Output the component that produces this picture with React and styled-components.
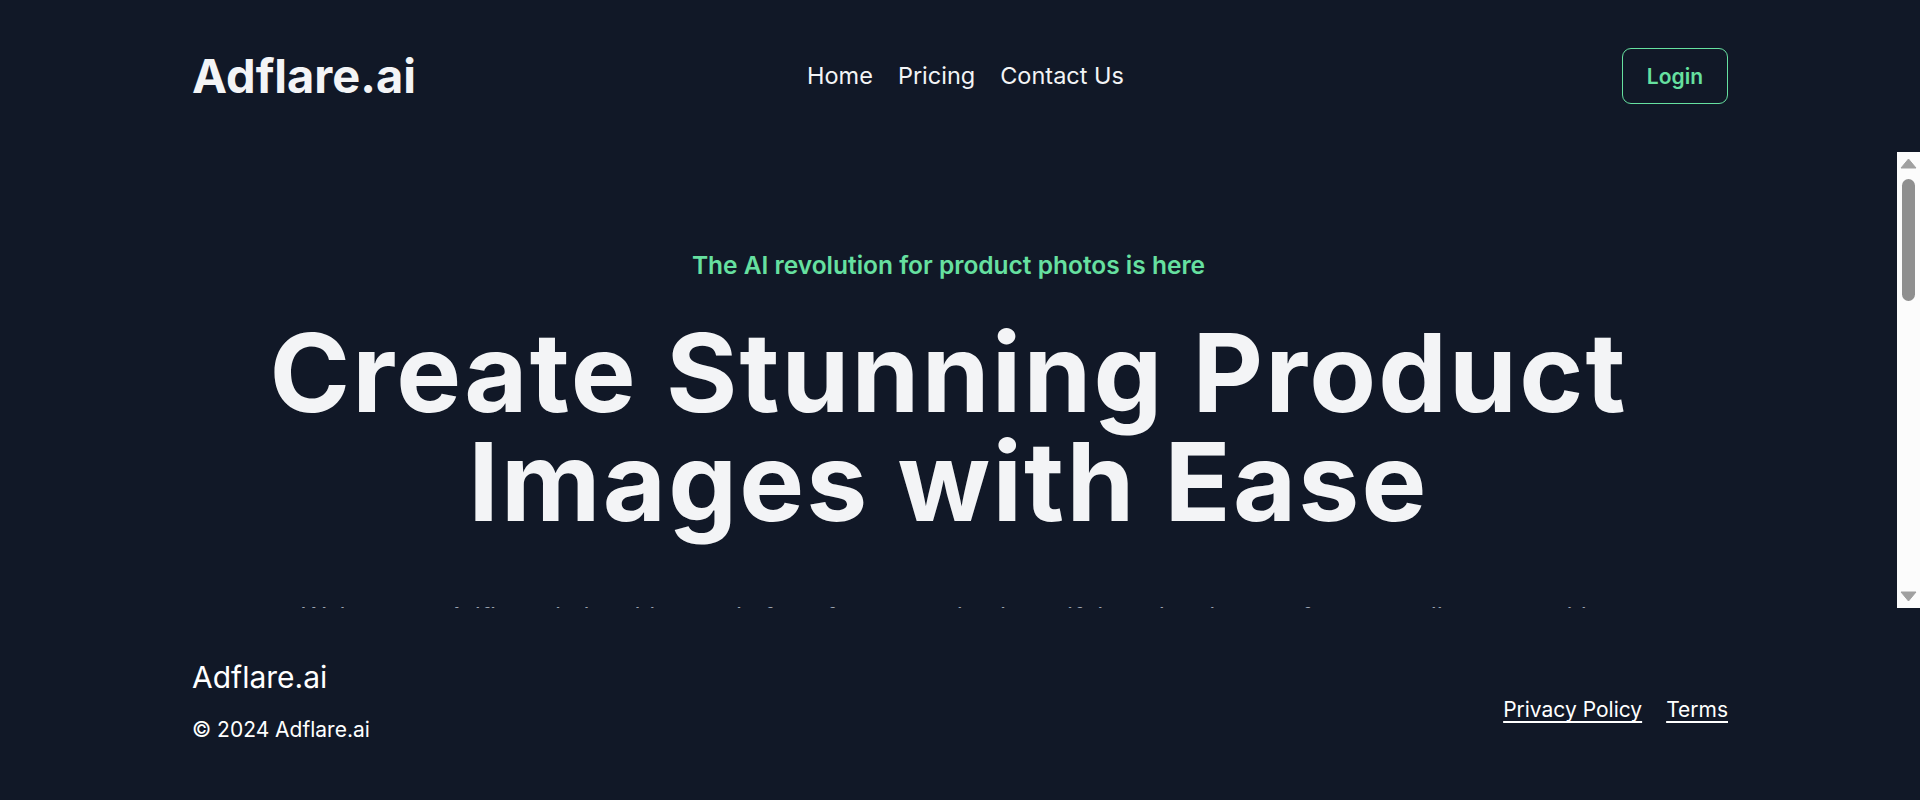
import React from "react";
import styled, { createGlobalStyle } from "styled-components";

const GREEN = "#66e0a0";
const BG = "#111827";

const Global = createGlobalStyle`
  html, body {
    margin: 0;
    padding: 0;
    background: ${BG};
    height: 100%;
    overflow: hidden;
  }
  #root { height: 100%; }
  * { box-sizing: border-box; }
  body {
    font-family: Inter, "Noto Sans", sans-serif;
    color: #f3f4f6;
  }
`;

const Page = styled.div`
  height: 100vh;
  display: flex;
  flex-direction: column;
  background: ${BG};
`;

const Header = styled.header`
  flex: 0 0 152px;
  display: flex;
  justify-content: center;
`;

const HeaderInner = styled.div`
  width: 1536px;
  display: grid;
  grid-template-columns: 1fr auto 1fr;
  align-items: center;
`;

const Logo = styled.a`
  font-size: 47px;
  line-height: 50px;
  font-weight: 700;
  color: #f3f4f6;
  text-decoration: none;
  justify-self: start;
`;

const Nav = styled.nav`
  display: flex;
  gap: 25px;
  padding-left: 11px;
`;

const NavLink = styled.a`
  font-size: 23.5px;
  line-height: 32px;
  color: #f3f4f6;
  text-decoration: none;
`;

const LoginButton = styled.button`
  justify-self: end;
  height: 56px;
  padding: 0 24px;
  border: 1px solid ${GREEN};
  border-radius: 9px;
  background: transparent;
  color: ${GREEN};
  font-family: Inter, sans-serif;
  font-size: 21px;
  font-weight: 600;
  cursor: pointer;
`;

const Main = styled.main`
  flex: 1 1 auto;
  min-height: 0;
  display: flex;
`;

const ScrollView = styled.div`
  flex: 1 1 auto;
  overflow-y: auto;
  overflow-x: hidden;
  scrollbar-width: none;
  &::-webkit-scrollbar { display: none; }
`;

const ScrollRail = styled.div`
  flex: 0 0 23px;
  display: flex;
  flex-direction: column;
  background: #fcfcfc;
`;

const RailButton = styled.div`
  flex: 0 0 23px;
  display: flex;
  align-items: center;
  justify-content: center;
`;

const RailTrack = styled.div`
  flex: 1 1 auto;
  padding: 4px 5px;
`;

const RailThumb = styled.div`
  height: 122px;
  border-radius: 7px;
  background: #8f8f8f;
`;

const Arrow = ({ down }) => (
  <svg width="23" height="23" viewBox="0 0 23 23">
    <polygon
      points={down ? "4,7 11.5,16 19,7" : "4,16 11.5,7 19,16"}
      fill="#a0a0a0"
      stroke="#a0a0a0"
      strokeWidth="1"
      strokeLinejoin="round"
    />
  </svg>
);

const Hero = styled.section`
  display: flex;
  flex-direction: column;
  align-items: center;
  padding-top: 96px;
  text-align: center;
`;

const Tagline = styled.p`
  margin: 0;
  font-size: 24.5px;
  line-height: 35px;
  font-weight: 600;
  color: ${GREEN};
`;

const Headline = styled.h1`
  margin: 35px 0 0;
  font-size: 109px;
  line-height: 109px;
  font-weight: 700;
  letter-spacing: 0.02em;
  color: #f3f4f6;
`;

const Lead = styled.p`
  margin: 61px 0 0;
  max-width: 1360px;
  font-size: 25px;
  line-height: 40px;
  color: #9ca3af;
`;

const Actions = styled.div`
  display: flex;
  gap: 25px;
  margin-top: 50px;
`;

const PrimaryButton = styled.a`
  padding: 18px 36px;
  border-radius: 9px;
  background: ${GREEN};
  color: ${BG};
  font-size: 22px;
  font-weight: 600;
  text-decoration: none;
`;

const GhostButton = styled(PrimaryButton)`
  background: transparent;
  color: ${GREEN};
  border: 1px solid ${GREEN};
`;

const Features = styled.section`
  width: 1536px;
  margin: 120px auto 0;
  padding-bottom: 140px;
`;

const FeaturesTitle = styled.h2`
  margin: 0 0 50px;
  text-align: center;
  font-size: 45px;
  font-weight: 700;
`;

const FeatureGrid = styled.div`
  display: grid;
  grid-template-columns: repeat(3, 1fr);
  gap: 40px;
`;

const FeatureCard = styled.div`
  min-height: 320px;
  padding: 40px;
  border-radius: 16px;
  background: #1f2937;
`;

const FeatureName = styled.h3`
  margin: 0 0 16px;
  font-size: 28px;
  color: ${GREEN};
`;

const FeatureText = styled.p`
  margin: 0;
  font-size: 21px;
  line-height: 32px;
  color: #d1d5db;
`;

const Footer = styled.footer`
  flex: 0 0 192px;
  display: flex;
  justify-content: center;
  padding-top: 49px;
`;

const FooterInner = styled.div`
  width: 1536px;
  display: flex;
  justify-content: space-between;
  align-items: flex-start;
`;

const FooterBrand = styled.div`
  display: flex;
  flex-direction: column;
  gap: 17px;
`;

const FooterLogo = styled.div`
  font-size: 30px;
  line-height: 40px;
  color: #ffffff;
`;

const Copyright = styled.div`
  font-size: 21px;
  line-height: 32px;
  color: #ffffff;
`;

const FooterLinks = styled.div`
  display: flex;
  gap: 24px;
  margin-top: 37px;
`;

const FooterLink = styled.a`
  font-size: 21px;
  line-height: 32px;
  color: #ffffff;
  text-decoration: underline;
  text-underline-offset: 4px;
`;

const features = [
  ["AI Backgrounds", "Place your products in stunning, realistic scenes generated in seconds."],
  ["Studio Lighting", "Get professional lighting and shadows without a photo studio."],
  ["Bulk Editing", "Process your whole catalog at once and keep a consistent look."],
];

export default function App() {
  return (
    <>
      <Global />
      <Page>
        <Header>
          <HeaderInner>
            <Logo href="#">Adflare.ai</Logo>
            <Nav>
              <NavLink href="#">Home</NavLink>
              <NavLink href="#">Pricing</NavLink>
              <NavLink href="#">Contact Us</NavLink>
            </Nav>
            <LoginButton>Login</LoginButton>
          </HeaderInner>
        </Header>
        <Main>
          <ScrollView>
            <Hero>
              <Tagline>The AI revolution for product photos is here</Tagline>
              <Headline>
                Create Stunning Product
                <br />
                Images with Ease
              </Headline>
              <Lead>
                Welcome to Adflare.ai, the ultimate platform for generating beautiful product images for
                your online store with ease. Upload a photo and let our AI do the rest.
              </Lead>
              <Actions>
                <PrimaryButton href="#">Get Started</PrimaryButton>
                <GhostButton href="#">See Pricing</GhostButton>
              </Actions>
            </Hero>
            <Features>
              <FeaturesTitle>Why Adflare.ai?</FeaturesTitle>
              <FeatureGrid>
                {features.map(([name, text]) => (
                  <FeatureCard key={name}>
                    <FeatureName>{name}</FeatureName>
                    <FeatureText>{text}</FeatureText>
                  </FeatureCard>
                ))}
              </FeatureGrid>
            </Features>
          </ScrollView>
          <ScrollRail aria-hidden="true">
            <RailButton>
              <Arrow />
            </RailButton>
            <RailTrack>
              <RailThumb />
            </RailTrack>
            <RailButton>
              <Arrow down />
            </RailButton>
          </ScrollRail>
        </Main>
        <Footer>
          <FooterInner>
            <FooterBrand>
              <FooterLogo>Adflare.ai</FooterLogo>
              <Copyright>© 2024 Adflare.ai</Copyright>
            </FooterBrand>
            <FooterLinks>
              <FooterLink href="#">Privacy Policy</FooterLink>
              <FooterLink href="#">Terms</FooterLink>
            </FooterLinks>
          </FooterInner>
        </Footer>
      </Page>
    </>
  );
}
